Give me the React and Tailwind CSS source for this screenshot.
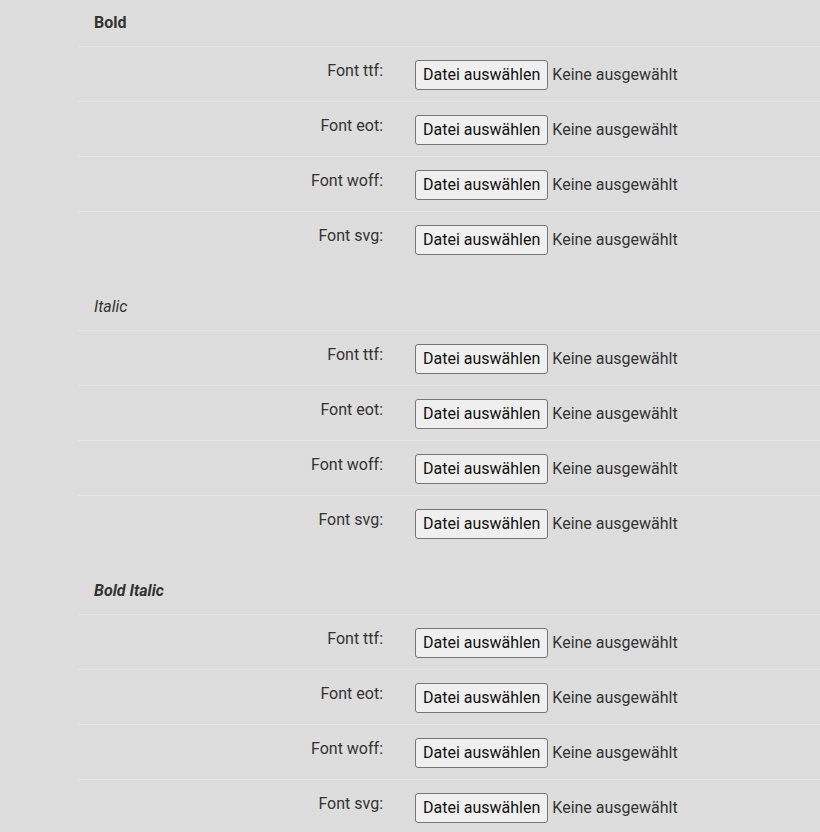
const SECTIONS = [
  { title: "Bold", style: "font-bold not-italic", first: true },
  { title: "Italic", style: "font-normal italic" },
  { title: "Bold Italic", style: "font-bold italic" },
];

const FORMATS = ["ttf", "eot", "woff", "svg"];

function FileRow({ format, last }) {
  return (
    <div className={`flex pt-[13px] pb-[11px] ${last ? "" : "border-b border-[#e5e5e9]"}`}>
      <div className="w-[321px] shrink-0 pr-4 pt-[1px] text-right leading-[19px]">
        Font {format}:
      </div>
      <div className="flex items-center pl-4">
        <span className="flex h-[30px] items-center rounded-[3px] border border-[#767676] bg-[#efefef] px-[7px] text-[#111]">
          Datei auswählen
        </span>
        <span className="ml-1">Keine ausgewählt</span>
      </div>
    </div>
  );
}

export default function App() {
  return (
    <div
      className="min-h-[832px] bg-[#dddddd] pl-[78px] text-[16px] text-[#333]"
      style={{ fontFamily: "Roboto, 'Liberation Sans', sans-serif" }}
    >
      {SECTIONS.map((s) => (
        <div key={s.title}>
          <div
            className={`border-b border-[#e5e5e9] pl-4 pb-[12px] leading-[22px] ${
              s.first ? "pt-[12px]" : "pt-[30px]"
            } ${s.style}`}
          >
            {s.title}
          </div>
          {FORMATS.map((f, i) => (
            <FileRow key={f} format={f} last={i === FORMATS.length - 1} />
          ))}
        </div>
      ))}
    </div>
  );
}
